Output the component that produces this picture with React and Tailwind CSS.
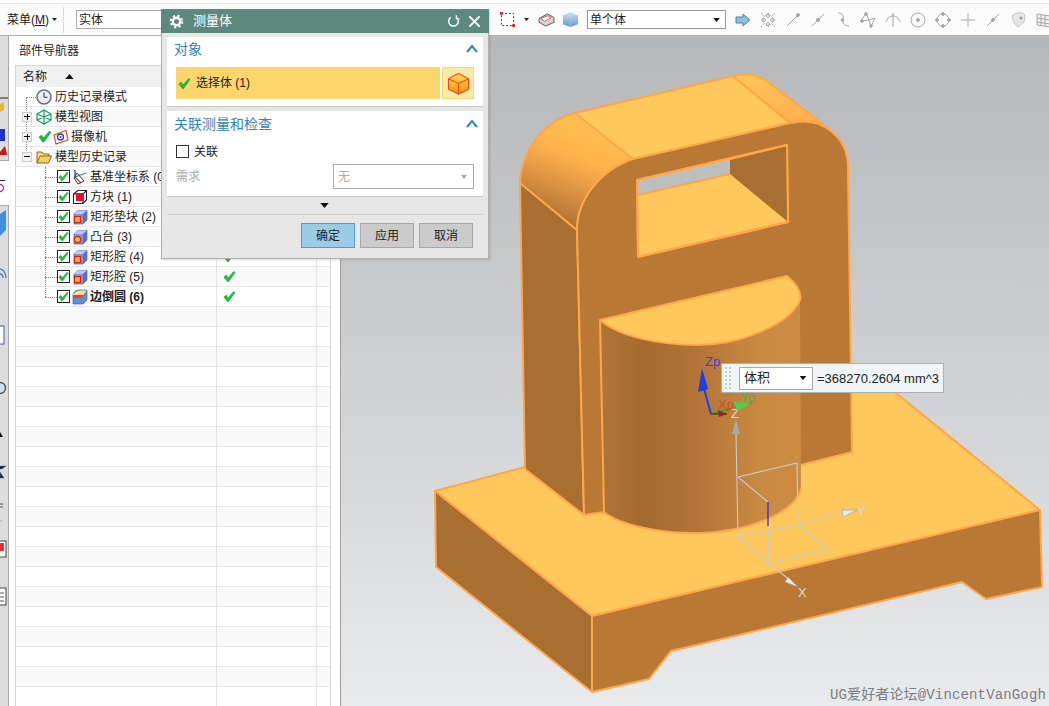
import React from "react";

const Check = ({ className = "" }) => (
  <svg viewBox="0 0 14 13" className={className}>
    <path d="M1 7 L3.5 5 L5.5 8 L11.5 1 L13 2.2 L6 12 L4.6 12 Z" fill="#16c23a" stroke="#0c8a28" strokeWidth="0.5" />
  </svg>
);

const TreeBox = () => (
  <span className="flex h-[13px] w-[13px] shrink-0 items-center justify-center border border-[#222] bg-white">
    <Check className="h-[11px] w-[12px]" />
  </span>
);

const Expander = ({ minus }) => (
  <span className="relative z-10 flex h-[10px] w-[10px] shrink-0 items-center justify-center border border-[#cfcfcf] bg-[#f2f2f2]">
    <span className="absolute h-[1px] w-[6px] bg-[#111]" />
    {!minus && <span className="absolute h-[6px] w-[1px] bg-[#111]" />}
  </span>
);

const Clock = () => (
  <svg viewBox="0 0 16 16" className="relative z-10 h-4 w-4 shrink-0">
    <circle cx="8" cy="8" r="7" fill="#e9eef3" stroke="#6b7076" strokeWidth="1.6" />
    <path d="M8 3.5V8.3H11.5" fill="none" stroke="#333" strokeWidth="1" />
  </svg>
);
const ViewIcon = () => (
  <svg viewBox="0 0 16 16" className="h-4 w-4 shrink-0" fill="none" stroke="#0e9a58" strokeWidth="1.1">
    <path d="M8 1 L15 5 V11 L8 15 L1 11 V5 Z M8 1 V15 M1 5 L15 11 M15 5 L1 11" />
  </svg>
);
const Camera = () => (
  <svg viewBox="0 0 16 16" className="h-4 w-4 shrink-0">
    <path d="M1 6 L13 1.5 L15 11 L3 15 Z" fill="#fff" stroke="#d6401c" strokeWidth="1.1" />
    <circle cx="7.5" cy="8" r="3" fill="none" stroke="#2b3fb0" strokeWidth="1.3" />
    <circle cx="7.5" cy="8" r="1" fill="#2b3fb0" />
  </svg>
);
const Folder = () => (
  <svg viewBox="0 0 16 14" className="h-[14px] w-4 shrink-0">
    <path d="M1 13 V2 H6 L7.5 4 H13 V6" fill="#f6dc8a" stroke="#7a5a16" strokeWidth="0.9" />
    <path d="M1 13 L4 6 H15.5 L12.5 13 Z" fill="#f8cf63" stroke="#7a5a16" strokeWidth="0.9" />
  </svg>
);
const Csys = () => (
  <svg viewBox="0 0 16 16" className="h-4 w-4 shrink-0" fill="none">
    <path d="M3 1 V8" stroke="#2233cc" strokeWidth="1.2" />
    <path d="M3 8 L14 4" stroke="#2a9d3a" strokeWidth="1.1" />
    <path d="M3 8 L9 14" stroke="#c03030" strokeWidth="1.1" />
    <path d="M5 4 L12 12 L6 15 L2 9 Z" stroke="#333" strokeWidth="1" />
  </svg>
);
const BlockIcon = () => (
  <svg viewBox="0 0 16 16" className="h-4 w-4 shrink-0">
    <path d="M1.5 5 L6 1.5 H14.5 V11 L11 14.5 H1.5 Z M1.5 5 H11 V14.5 M11 5 L14.5 1.5" fill="#fff" stroke="#222" strokeWidth="1.1" />
    <rect x="4" y="4" width="8" height="8" fill="#e0122c" />
  </svg>
);
const PadIcon = ({ inner = "square" }) => (
  <svg viewBox="0 0 16 16" className="h-4 w-4 shrink-0">
    <path d="M2 5 L6 1.5 H15 V11 L11 15 H2 Z" fill="#7f93de" stroke="#4c5fa8" strokeWidth="0.7" />
    <path d="M2 5 L6 1.5 H15 L11 5 Z" fill="#bdc8f0" />
    <path d="M11 5 L15 1.5 V11 L11 15 Z" fill="#5a6fc0" />
    {inner === "circle" ? (
      <circle cx="5.5" cy="10.5" r="3.2" fill="#f7b731" stroke="#d8201c" strokeWidth="1.2" />
    ) : (
      <rect x="2.5" y="7.5" width="6" height="6" fill="#f7b731" stroke="#d8201c" strokeWidth="1.2" />
    )}
  </svg>
);
const BlendIcon = () => (
  <svg viewBox="0 0 16 16" className="h-4 w-4 shrink-0">
    <path d="M1 5 C2 2 5 1 8 1 H15 V11 L11 15 H1 Z" fill="#5f8fd8" stroke="#3b62a8" strokeWidth="0.7" />
    <path d="M1 5 C3 3 5 2 9 1.5 H15 L11 6 H1 Z" fill="#fde08a" />
    <path d="M1 6 H11 V9 H1 Z" fill="#e8402c" />
  </svg>
);
const Cube = () => (
  <svg viewBox="0 0 24 24" className="h-[23px] w-[23px]">
    <defs>
      <linearGradient id="cubeG" x1="0" y1="0" x2="0" y2="1">
        <stop offset="0" stopColor="#ffe25c" />
        <stop offset="1" stopColor="#f58a0a" />
      </linearGradient>
    </defs>
    <path d="M12 1.5 L22.5 7 V18 L12 23 L1.5 18 V7 Z" fill="url(#cubeG)" stroke="#ef4a18" strokeWidth="1.1" />
    <path d="M1.5 7 L12 12 L22.5 7 M12 12 V23" fill="none" stroke="#ef4a18" strokeWidth="1.1" />
  </svg>
);

const Chevron = () => (
  <svg viewBox="0 0 12 9" className="-mt-[2px] h-[9px] w-3">
    <path d="M1 8 L6 2 L11 8" fill="none" stroke="#2e86b5" strokeWidth="2" />
  </svg>
);

const Caret = ({ className = "" }) => (
  <svg viewBox="0 0 10 6" className={className}>
    <path d="M0 0 H10 L5 6 Z" fill="currentColor" />
  </svg>
);

const rowsData = [
  { expander: null, icons: [<Clock key="a" />], text: "历史记录模式" },
  { expander: "plus", icons: [<ViewIcon key="a" />], text: "模型视图" },
  { expander: "plus", icons: [<Check key="c" className="ml-[2px] h-[13px] w-[14px] shrink-0" />, <Camera key="a" />], text: "摄像机", pad: true },
  { expander: "minus", icons: [<Folder key="a" />], text: "模型历史记录" },
  { feat: <Csys />, text: "基准坐标系 (0)" },
  { feat: <BlockIcon />, text: "方块 (1)" },
  { feat: <PadIcon />, text: "矩形垫块 (2)" },
  { feat: <PadIcon inner="circle" />, text: "凸台 (3)" },
  { feat: <PadIcon />, text: "矩形腔 (4)", ok: true },
  { feat: <PadIcon />, text: "矩形腔 (5)", ok: true },
  { feat: <BlendIcon />, text: "边倒圆 (6)", ok: true, bold: true },
];
const allRows = Array.from({ length: 31 }, (_, i) => rowsData[i] || {});

function NavRow({ row, index }) {
  return (
    <div className={`flex h-5 shrink-0 border-b border-[#e6e6e6] ${index % 2 ? "bg-[#f9f9f9]" : "bg-white"}`}>
      <div className="flex w-[201px] shrink-0 items-center overflow-hidden border-r border-[#e6e6e6] text-[12px] leading-none text-[#222]">
        {row.text && !row.feat && (
          <div className="flex items-center">
            <span className="ml-[6px] flex w-[10px] shrink-0">{row.expander && <Expander minus={row.expander === "minus"} />}</span>
            <span className={`ml-[4px] flex items-center ${row.pad ? "gap-[1px]" : ""}`}>{row.icons}</span>
            <span className={`whitespace-nowrap ${row.pad ? "ml-[2px]" : "ml-[3px]"}`}>{row.text}</span>
          </div>
        )}
        {row.feat && (
          <div className="ml-[41px] flex items-center">
            <TreeBox />
            <span className="ml-[2px]">{row.feat}</span>
            <span className={`ml-[2px] whitespace-nowrap ${row.bold ? "font-bold" : ""}`}>{row.text}</span>
          </div>
        )}
      </div>
      <div className="flex w-[100px] shrink-0 items-center border-r border-[#e6e6e6] pl-[6px]">
        {row.ok && <Check className="h-[13px] w-[13px]" />}
      </div>
      <div className="flex-1" />
    </div>
  );
}

const G = "#a6a6a6";
const ToolIcons = [
  <path key="1" d="M1 5 H8 V2 L15 8 L8 14 V11 H1 Z" fill="#84c4d8" stroke="#5b7f9b" strokeWidth="1" />,
  <g key="2" fill="none" stroke={G} strokeWidth="1"><path d="M8 1 L15 8 L8 15 L1 8 Z M1 1 L4 4 M15 1 L12 4 M1 15 L4 12 M15 15 L12 12" strokeDasharray="2 1" /><circle cx="8" cy="4" r="1.5" /><circle cx="8" cy="12" r="1.5" /><circle cx="4" cy="8" r="1.5" /><circle cx="12" cy="8" r="1.5" /></g>,
  <g key="3" fill="none" stroke={G} strokeWidth="1"><path d="M2 14 L12 4" /><circle cx="13" cy="3" r="1.5" fill={G} /></g>,
  <g key="4" fill="none" stroke={G} strokeWidth="1"><path d="M2 14 L14 2" /><circle cx="8" cy="8" r="1.5" fill={G} /></g>,
  <g key="5" fill="none" stroke={G} strokeWidth="1"><path d="M3 1 C8 1 9 4 8 7 C7 11 9 14 14 14" /><circle cx="7.5" cy="8" r="1.3" fill={G} /></g>,
  <g key="6" fill="none" stroke={G} strokeWidth="1"><path d="M1 9 L6 1 L9 8 L15 6 L11 15 L9 8 L1 9" /><circle cx="6" cy="2" r="1.3" fill={G} /><circle cx="2" cy="9" r="1.3" fill={G} /><circle cx="11" cy="14" r="1.3" fill={G} /></g>,
  <g key="7" fill="none" stroke={G} strokeWidth="1"><path d="M1 10 C3 5 5 4 8 4 C11 4 13 5 15 10 M8 1 V15" /></g>,
  <g key="8" fill="none" stroke={G} strokeWidth="1"><circle cx="8" cy="8" r="7" /><circle cx="8" cy="8" r="1.4" fill={G} /></g>,
  <g key="9" fill="none" stroke={G} strokeWidth="1"><circle cx="8" cy="8" r="6" /><circle cx="8" cy="2" r="1.4" fill={G} /><circle cx="2" cy="8" r="1.4" fill={G} /><circle cx="14" cy="8" r="1.4" fill={G} /><circle cx="8" cy="14" r="1.4" fill={G} /></g>,
  <path key="10" d="M8 1 V15 M1 8 H15" fill="none" stroke={G} strokeWidth="1" />,
  <g key="11" fill="none" stroke={G} strokeWidth="1"><path d="M2 14 L14 2" /><circle cx="8" cy="8" r="1.4" fill={G} /></g>,
  <g key="12"><path d="M2 4 C6 0 12 0 15 3 L14 10 C12 11 10 13 9 15 C6 14 3 11 2 4 Z" fill="#e6e6e6" stroke="#c4c4c4" /><circle cx="11" cy="6" r="1.5" fill="#9a9a9a" /></g>,
  <path key="13" d="M2 2 L15 4 V15 L2 13 Z M2 6 L15 8 M2 10 L15 12 M6 3 V14 M10 3 V14" fill="#f2f2f2" stroke="#a8a8a8" strokeWidth="1" />,
];

function Toolbar() {
  return (
    <div className="flex h-[36px] shrink-0 items-start border-b border-[#aeaeae] bg-white">
      <div className="mt-[3px] flex h-[32px] flex-1 items-center border-t border-[#e2e2e2] bg-[#fbfbfb]">
        <span className="ml-[7px] w-[40px] text-[12px] leading-none whitespace-nowrap text-[#222]">
          菜单(<span className="underline">M</span>)
        </span>
        <Caret className="ml-[5px] h-[3px] w-[5px] text-[#222]" />
        <span className="ml-[6px] h-[26px] w-px bg-[#dcdcdc]" />
        <div className="ml-[12px] flex h-[19px] w-[400px] items-center border border-[#aaa] bg-white pl-[2px] text-[12px] text-[#222]">实体</div>
        <svg viewBox="0 0 16 16" className="ml-[24px] h-[15px] w-[15px]" fill="none">
          <rect x="1.5" y="1.5" width="13" height="13" stroke="#333" strokeDasharray="2 2" />
          <rect x="0" y="0" width="3" height="3" fill="#d22" />
          <rect x="13" y="13" width="3" height="3" fill="#d22" />
        </svg>
        <Caret className="ml-[9px] h-[3px] w-[5px] text-[#222]" />
        <svg viewBox="0 0 18 16" className="ml-[9px] h-[15px] w-[17px]">
          <path d="M1 7 L10 2 L17 6 V11 L8 15 L1 11 Z" fill="#d4d4d4" stroke="#555" />
          <path d="M3 7 L10 4 L14 6 L7 10 Z" fill="#fff" stroke="#d33" strokeWidth="0.8" />
        </svg>
        <svg viewBox="0 0 18 18" className="ml-[7px] h-[17px] w-[17px]">
          <defs>
            <linearGradient id="tb" x1="0" y1="0" x2="0" y2="1">
              <stop offset="0" stopColor="#cfe6f7" />
              <stop offset="1" stopColor="#4f9fdf" />
            </linearGradient>
          </defs>
          <path d="M1 5 L9 1 L17 5 V14 L9 17 L1 14 Z" fill="url(#tb)" />
          <path d="M1 5 L9 9 L17 5 M9 9 V17" fill="none" stroke="#e8a4a4" strokeWidth="0.8" />
        </svg>
        <div className="ml-[8px] flex h-[19px] w-[139px] items-center justify-between border border-[#999] bg-white pl-[2px] pr-[5px] text-[12px] text-[#222]">
          单个体
          <Caret className="h-[4px] w-[7px] text-[#111]" />
        </div>
        <div className="ml-[9px] flex items-center gap-[9px]">
          {ToolIcons.map((ic, i) => (
            <svg key={i} viewBox="0 0 16 16" className="h-4 w-4 shrink-0">
              {ic}
            </svg>
          ))}
        </div>
      </div>
    </div>
  );
}

function LeftStrip() {
  return (
    <div className="flex w-[9px] shrink-0 flex-col">
      <div className="h-[125px] shrink-0 overflow-hidden border-r border-b border-[#a8a8a8] bg-[#dcdcdc]">
        <svg viewBox="0 0 8 125" className="h-[125px] w-2">
          <path d="M0 62 H8" stroke="#222" strokeWidth="1" />
          <path d="M0 68 L4 66 V74 L0 76 Z" fill="#e8b72c" />
          <rect x="0" y="93" width="5" height="12" fill="#2233cc" />
          <path d="M0 116 L5 110 L7 118 V119 H0 Z" fill="#c81818" />
        </svg>
      </div>
      <div className="h-[44px] shrink-0 bg-white">
        <svg viewBox="0 0 8 44" className="h-[44px] w-2">
          <path d="M0 19.5 H5" stroke="#222" />
          <circle cx="0" cy="27" r="3.5" fill="none" stroke="#a0408a" strokeWidth="1.4" />
        </svg>
      </div>
      <div className="flex-1 overflow-hidden border-t border-r border-[#a8a8a8] bg-[#dcdcdc]">
        <svg viewBox="0 0 8 500" className="h-[500px] w-2" fill="none">
          <path d="M0 8 L6 4 V24 L0 30 Z" fill="#3f8fe0" />
          <path d="M0 63 C3 63 6 67 6 72 M0 68 C2 68 3 70 3 72" stroke="#3f7fd0" strokeWidth="1.3" />
          <rect x="-3" y="120" width="7" height="18" fill="#fff" stroke="#3d5a90" />
          <circle cx="0" cy="182" r="5.5" fill="#cfe0f0" stroke="#555" strokeWidth="1.4" />
          <path d="M0 226 L3 231 H0 Z" fill="#111" />
          <path d="M0 260 H6 L2 263 H0 M0 266 L4 272 H0 Z" fill="#222" stroke="#3f6fd0" strokeWidth="0.5" />
          <path d="M0 298 H3 M0 301 H3" stroke="#555" strokeWidth="1" />
          <circle cx="1" cy="315" r="1" fill="#bbb" />
          <rect x="-3" y="335" width="9" height="16" fill="#fff" stroke="#444" />
          <rect x="0" y="337" width="4" height="8" fill="#d33" />
          <rect x="-3" y="382" width="9" height="17" fill="#fff" stroke="#444" />
          <path d="M0 387 H4 M0 391 H4 M0 395 H4" stroke="#555" />
        </svg>
      </div>
    </div>
  );
}

function Navigator() {
  return (
    <div className="relative flex w-[331px] shrink-0 flex-col bg-white pl-[6px] pr-[9px]">
      <div className="flex h-[29px] shrink-0 items-center pl-[4px] text-[12px] text-[#222]">部件导航器</div>
      <div className="relative flex min-h-0 flex-1 flex-col overflow-hidden border-x border-t border-[#d6d6d6]">
        <div className="flex h-[21px] shrink-0 items-center bg-[#f0f0f0] pl-[7px] text-[12px] text-[#222]">
          名称
          <Caret className="ml-[18px] h-[5px] w-[9px] rotate-180 text-[#111]" />
        </div>
        {allRows.map((r, i) => (
          <NavRow key={i} row={r} index={i} />
        ))}
        <span className="absolute left-[10px] top-[31px] h-[60px] border-l border-dotted border-[#888]" />
        <span className="absolute left-[10px] top-[31px] w-[10px] border-t border-dotted border-[#888]" />
        <span className="absolute left-[29px] top-[101px] h-[130px] border-l border-dotted border-[#888]" />
        {[111, 131, 151, 171, 191, 211, 231].map((t) => (
          <span key={t} className="absolute left-[29px] w-[12px] border-t border-dotted border-[#888]" style={{ top: t }} />
        ))}
      </div>
    </div>
  );
}

function Model() {
  const E = { stroke: "#ffa54a", strokeWidth: 2, strokeLinejoin: "round" };
  return (
    <svg viewBox="341 36 708 670" className="absolute inset-0 h-full w-full">
      <defs>
        <linearGradient id="fil" x1="0.3" y1="0.95" x2="0.62" y2="0.15">
          <stop offset="0" stopColor="#a96f30" />
          <stop offset="0.45" stopColor="#e49a45" />
          <stop offset="0.7" stopColor="#ffb24c" />
          <stop offset="1" stopColor="#ffbc50" />
        </linearGradient>
        <linearGradient id="filR" x1="0" y1="0" x2="1" y2="1">
          <stop offset="0" stopColor="#ffc85c" />
          <stop offset="1" stopColor="#ffab48" />
        </linearGradient>
        <linearGradient id="cyl" x1="0" y1="0" x2="1" y2="0">
          <stop offset="0" stopColor="#b07638" />
          <stop offset="0.22" stopColor="#a4692e" />
          <stop offset="0.5" stopColor="#b47638" />
          <stop offset="0.8" stopColor="#c98a42" />
          <stop offset="1" stopColor="#cc8c44" />
        </linearGradient>
      </defs>
      {/* base */}
      <path d="M435 491 L525 467 L870 372 L1040 510 L592 616 Z" fill="#ffc85c" {...E} />
      <path d="M435 491 L592 616 L592 692 L436 567 Z" fill="#a96f30" {...E} />
      <path d="M592 616 L1040 510 L1042 587 L986 599 L962 582 L671 651 L649 679 L592 692 Z" fill="#b97935" {...E} />
      {/* upright */}
      <path d="M520 183 L577 230 L584 515 L525 469 Z" fill="#a96f30" {...E} />
      <path d="M520 183 C521 150 545 120 575 113 L633 159 C600 170 577 200 577 230 Z" fill="url(#fil)" {...E} />
      <path d="M575 113 L733 76 L790 123 L633 159 Z" fill="#ffc85c" {...E} />
      <path d="M733 76 C748 72 762 76 773 86 L823 124 C815 121 805 120 790 123 Z" fill="url(#filR)" {...E} />
      <path d="M577 230 C577 200 600 170 633 159 L790 123 C825 115 848 140 848 167 L852 452 L801 465 L604 512 L584 515 Z" fill="#b97935" {...E} />
      {/* window */}
      <path d="M637 180 L787 145 L788 222 L638 257 Z" fill="#ffc85c" {...E} />
      <path d="M638 181 L730 160 V174 L638 195 Z" fill="#bcbec0" />
      <path d="M730 160 L787 146 L788 222 L730 174 Z" fill="#a96f30" />
      <path d="M638 195 L730 174" fill="none" {...E} />
      <path d="M637 180 L787 145 L788 222 L638 257 Z" fill="none" {...E} />
      {/* cylinder */}
      <path d="M600 320 C620 337 660 345 697 345 C740 345 790 325 800 300 L801 487 C800 510 750 532 701 533 C660 534 620 525 604 512 Z" fill="url(#cyl)" />
      <path d="M600 320 L604 512 C620 525 660 534 701 533 C750 532 800 510 801 487" fill="none" {...E} />
      <path d="M600 320 L787 276 C797 284 802 292 800 300 C790 325 740 345 697 345 C660 345 620 337 600 320 Z" fill="#ffc85c" {...E} />
      {/* WCS */}
      <g fill="none" stroke="#c9ccd0" strokeWidth="1.1">
        <path d="M736 433 L738 538 M738 477 L797 463 L798 525 M738 477 L768 502" />
        <path d="M738 537 L798 525 L828 549 L770 563 Z" />
        <path d="M768 526 L769 563 L792 582 M798 525 L843 513" />
      </g>
      <path d="M768 502 V526" stroke="#2222dd" strokeWidth="1.2" />
      <path d="M736 419 L732 434 H740 Z" fill="#a7aaae" />
      <path d="M857 510 L842 510 L843 517 Z" fill="#e8e8e8" stroke="#9a9a9a" strokeWidth="0.6" />
      <path d="M798 587 L788 577 L785 582 Z" fill="#e8e8e8" stroke="#9a9a9a" strokeWidth="0.6" />
      <g fill="#d9dbde" fontFamily="'Liberation Sans',sans-serif" fontSize="13">
        <text x="731" y="418">Z</text>
        <text x="857" y="515">Y</text>
        <text x="798" y="597">X</text>
      </g>
      {/* part csys */}
      <path d="M711 414 L703 385" stroke="#1f3fe0" strokeWidth="2" />
      <path d="M702 368 L698 392 L708 389 Z" fill="#1f3fe0" />
      <path d="M711 414 L752 403" stroke="#22a82a" strokeWidth="1.6" />
      <path d="M752 403 L734 402 L737 411 Z" fill="#4ed04e" />
      <path d="M711 414 L727 414" stroke="#8a2a20" strokeWidth="1.4" />
      <path d="M727 414 L718 410 L719 417 Z" fill="#8a2a20" />
      <g fontFamily="'Liberation Sans',sans-serif" fontSize="13">
        <text x="705" y="366" fill="#3a3fe0">Zp</text>
        <text x="718" y="409" fill="#d04a3a">Xp</text>
        <text x="740" y="402" fill="#4cb04c">Yp</text>
      </g>
    </svg>
  );
}

function Tooltip() {
  return (
    <div className="absolute left-[380px] top-[327px] flex h-[30px] w-[223px] items-center border border-[#b0b0b0] bg-[#f0f5f7]">
      <div className="ml-[3px] grid grid-cols-2 gap-x-[2px] gap-y-[2px]">
        {Array.from({ length: 12 }, (_, i) => (
          <span key={i} className="h-[2px] w-[2px] bg-[#c4c8cc]" />
        ))}
      </div>
      <div className="ml-[8px] flex h-[23px] w-[74px] items-center justify-between border border-[#aaa] bg-white pl-[4px] pr-[5px] text-[13px] text-[#222]">
        体积
        <Caret className="h-[4px] w-[8px] text-[#111]" />
      </div>
      <span className="ml-[4px] mt-[1px] whitespace-nowrap text-[13px] text-[#222]">=368270.2604 mm^3</span>
    </div>
  );
}

function Dialog() {
  return (
    <div className="absolute left-[161px] top-[9px] flex h-[250px] w-[328px] flex-col border-x border-b border-[#b0b0b0] bg-[#e6e6e6] shadow-[1px_1px_2px_rgba(0,0,0,0.15)]">
      <div className="-mx-px flex h-[24px] shrink-0 items-center bg-[#5d887e] pl-[8px] pr-[8px] text-white">
        <svg viewBox="0 0 16 16" className="h-[15px] w-[15px]" fill="none" stroke="#fff">
          <circle cx="8" cy="8" r="4" strokeWidth="2.6" />
          <circle cx="8" cy="8" r="6.2" strokeWidth="2" strokeDasharray="2.4 2.5" />
        </svg>
        <span className="ml-[9px] text-[13px]">测量体</span>
        <svg viewBox="0 0 14 14" className="ml-auto h-[13px] w-[13px]" fill="none" stroke="#fff" strokeWidth="1.6">
          <path d="M4 2.5 A5.2 5.2 0 1 0 10 2.5" />
          <path d="M10 0 V4 H13.5" strokeWidth="1.2" />
        </svg>
        <svg viewBox="0 0 14 14" className="ml-[8px] h-[13px] w-[13px]" fill="none" stroke="#fff" strokeWidth="2">
          <path d="M1.5 1.5 L12.5 12.5 M12.5 1.5 L1.5 12.5" />
        </svg>
      </div>
      <div className="mx-[5px] mt-[4px] flex h-[70px] shrink-0 flex-col border-b border-[#c8c8c8] bg-white">
        <div className="flex h-[25px] items-center justify-between pl-[7px] pr-[5px] text-[14px] text-[#2e86b5]">
          对象
          <Chevron />
        </div>
        <div className="mx-[9px] mt-[5px] flex h-[32px] gap-[2px]">
          <div className="flex flex-1 items-center bg-[#fdd56d] pl-[2px] text-[12px] text-[#222]">
            <Check className="h-[13px] w-[13px]" />
            <span className="ml-[5px]">选择体 (1)</span>
          </div>
          <div className="flex w-[32px] items-center justify-center border border-[#fdd56d] bg-[#fbe8ab]">
            <Cube />
          </div>
        </div>
      </div>
      <div className="mx-[5px] mt-[4px] flex h-[86px] shrink-0 flex-col border-b border-[#c8c8c8] bg-white">
        <div className="flex h-[26px] items-center justify-between pl-[7px] pr-[5px] text-[14px] text-[#2e86b5]">
          关联测量和检查
          <Chevron />
        </div>
        <div className="ml-[9px] mt-[8px] flex h-[13px] items-center text-[12px] text-[#222]">
          <span className="h-[13px] w-[13px] border border-[#333] bg-white" />
          <span className="ml-[5px]">关联</span>
        </div>
        <div className="ml-[9px] mr-[9px] mt-[6px] flex items-center justify-between text-[12px] text-[#aaa]">
          需求
          <div className="flex h-[25px] w-[141px] items-center justify-between border border-[#aaa] bg-white pl-[4px] pr-[5px]">
            无
            <Caret className="h-[4px] w-[8px] text-[#aaa]" />
          </div>
        </div>
      </div>
      <div className="flex h-[17px] shrink-0 items-center justify-center pr-[2px]">
        <Caret className="h-[5px] w-[9px] text-[#111]" />
      </div>
      <div className="mx-[5px] h-px shrink-0 bg-[#cfcfcf]" />
      <div className="mr-[15px] mt-[8px] flex justify-end gap-[5px] text-[12px] text-[#222]">
        <button className="flex h-[25px] w-[54px] items-center justify-center border border-[#4b9fd0] bg-[#9ccbe6]">确定</button>
        <button className="flex h-[25px] w-[54px] items-center justify-center border border-[#a8a8a8] bg-[#cbcbcb]">应用</button>
        <button className="flex h-[25px] w-[54px] items-center justify-center border border-[#a8a8a8] bg-[#cbcbcb]">取消</button>
      </div>
    </div>
  );
}

export default function App() {
  return (
    <div className="relative flex h-[706px] w-[1049px] flex-col overflow-hidden bg-white font-['Liberation_Sans','Noto_Sans_CJK_SC',sans-serif]">
      <Toolbar />
      <div className="flex min-h-0 flex-1">
        <LeftStrip />
        <Navigator />
        <div className="relative flex-1 border-l border-[#a0a0a0] bg-gradient-to-b from-[#b5b7b9] to-[#e9eaec]">
          <Model />
          <Tooltip />
          <div className="absolute bottom-[4px] right-[3px] font-['Liberation_Mono','Noto_Sans_CJK_SC',monospace] text-[14px] leading-none tracking-[0.15px] whitespace-nowrap text-[#7c7e82]">
            UG爱好者论坛@VincentVanGogh
          </div>
        </div>
      </div>
      <Dialog />
    </div>
  );
}
